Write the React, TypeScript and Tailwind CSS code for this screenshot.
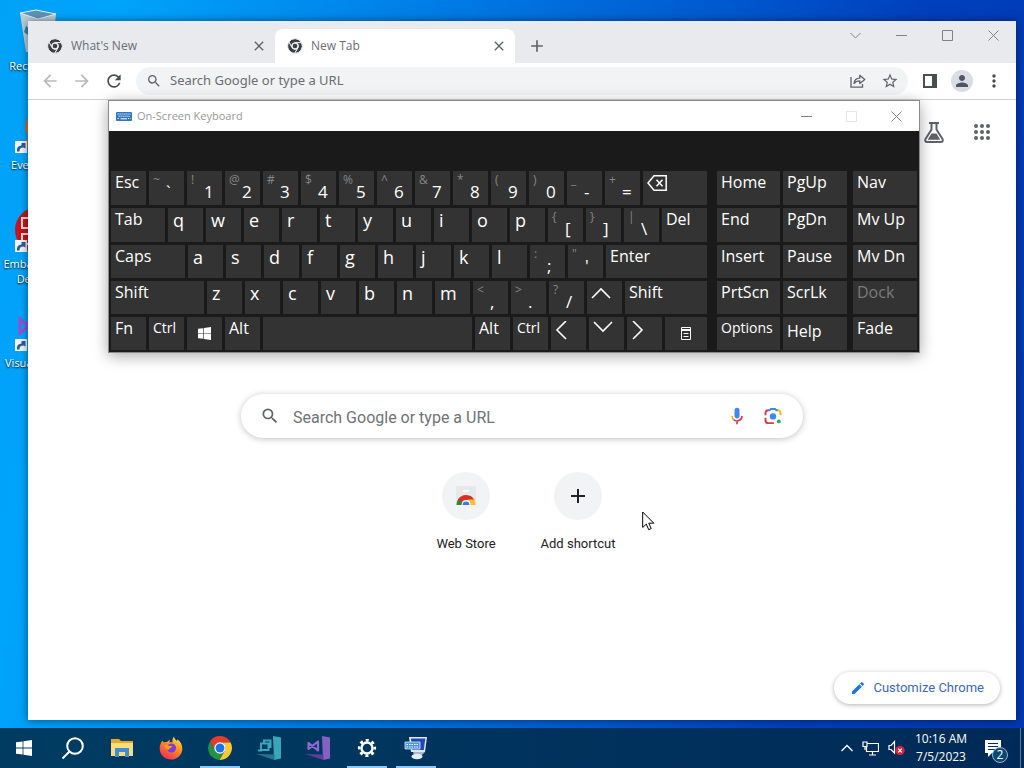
import type { ReactNode } from "react";
import {
  MdAdd,
  MdArrowBack,
  MdArrowForward,
  MdClose,
  MdEdit,
  MdMoreVert,
  MdPerson,
  MdRefresh,
  MdSearch,
  MdStarBorder,
} from "react-icons/md";

type KeyKind = "letter" | "label" | "small" | "low" | "dual" | "icon" | "dim";

type KeyDef = {
  text?: string;
  alt?: string;
  name?: string;
  kind: KeyKind;
  width: string;
  icon?: ReactNode;
};

const W = "flex-[35_1_0px]";

const letters = (chars: string): KeyDef[] =>
  chars.split("").map((c) => ({ text: c, kind: "letter", width: W }));

const duals = (pairs: string[]): KeyDef[] =>
  pairs.map((p) => ({ alt: p[0], text: p[1], kind: "dual", width: W }));

const label = (text: string, width: string, kind: KeyKind = "label"): KeyDef => ({ text, width, kind });

function Arrow({ d }: { d: string }) {
  return (
    <svg width="20" height="20" viewBox="0 0 20 20" fill="none" stroke="#fff" strokeWidth="1.6">
      <path d={d} />
    </svg>
  );
}

function WindowsLogo({ size }: { size: number }) {
  return (
    <svg width={size} height={size} viewBox="0 0 16 16" fill="#fff">
      <path d="M0 2.3 6.6 1.4v6.2H0zM7.4 1.3 16 0v7.6H7.4zM0 8.4h6.6v6.2L0 13.7zM7.4 8.4H16V16l-8.6-1.3z" />
    </svg>
  );
}

const backspaceIcon = (
  <svg width="20" height="16" viewBox="0 0 20 16" fill="none" stroke="#fff" strokeWidth="1.5">
    <path d="M7 .8h12.2v14.4H7L1 8zM9.5 4.8l6 6.4M15.5 4.8l-6 6.4" />
  </svg>
);

const menuIcon = (
  <svg width="10" height="13" viewBox="0 0 10 13" fill="none" stroke="#fff">
    <path d="M.5.5h9v12h-9zM0 2.5h10M0 3.5h10M2.5 6.5h5M2.5 9.5h5" />
  </svg>
);

const mainRows: KeyDef[][] = [
  [
    label("Esc", W),
    ...duals(["~`", "!1", "@2", "#3", "$4", "%5", "^6", "&7", "*8", "(9", ")0", "_-", "+="]),
    { name: "Backspace", kind: "label", width: "flex-[64_1_0px]", icon: backspaceIcon },
  ],
  [
    label("Tab", "flex-[54_1_0px]"),
    ...letters("qwertyuiop"),
    ...duals(["{[", "}]", "|\\"]),
    label("Del", "flex-[45_1_0px]"),
  ],
  [
    label("Caps", "flex-[74_1_0px]"),
    ...letters("asdfghjkl"),
    ...duals([":;", "\"'"]),
    label("Enter", "flex-[101_1_0px]"),
  ],
  [
    label("Shift", "flex-[93_1_0px]"),
    ...letters("zxcvbnm"),
    ...duals(["<,", ">.", "?/"]),
    { name: "Up", kind: "label", width: W, icon: <Arrow d="M1 13 10 4l9 9" /> },
    label("Shift", "flex-[82_1_0px]"),
  ],
  [
    label("Fn", W),
    label("Ctrl", W, "small"),
    { name: "Windows", kind: "icon", width: W, icon: <WindowsLogo size={13} /> },
    label("Alt", W),
    { name: "Space", kind: "label", width: "flex-[209_1_0px]" },
    label("Alt", W),
    label("Ctrl", W, "small"),
    { name: "Left", kind: "label", width: W, icon: <Arrow d="M11 0 2 9l9 9" /> },
    { name: "Down", kind: "label", width: W, icon: <Arrow d="M1 1l9 9 9-9" /> },
    { name: "Right", kind: "label", width: W, icon: <Arrow d="M2 0l9 9-9 9" /> },
    { name: "Menu", kind: "icon", width: "flex-[42_1_0px]", icon: menuIcon },
  ],
];

const navRows: KeyDef[][] = [
  ["Home", "PgUp"],
  ["End", "PgDn"],
  ["Insert", "Pause"],
  ["PrtScn", "ScrLk"],
  ["Options", "Help"],
].map(([a, b]) => [
  label(a, "flex-[63_1_0px]", a === "Options" ? "small" : "label"),
  label(b, "flex-[64_1_0px]", b === "Help" ? "low" : "label"),
]);

const sideRows: KeyDef[][] = ["Nav", "Mv Up", "Mv Dn", "Dock", "Fade"].map((t) => [
  label(t, "flex-1", t === "Dock" ? "dim" : "label"),
]);

const kindClass: Record<KeyKind, string> = {
  letter: "items-start px-[5px] text-lg leading-6",
  label: "items-start px-1 text-base leading-[22px]",
  small: "items-start px-1 text-sm leading-[22px]",
  low: "items-start px-1 text-base leading-7",
  dim: "items-start px-1 text-base leading-[22px] text-[#7a7a7a]",
  dual: "items-start pl-1",
  icon: "items-center justify-center",
};

function Key({ k }: { k: KeyDef }) {
  // padding sits on the inner span so the flex weights stay exact
  return (
    <button
      aria-label={k.name}
      className={`flex min-w-0 overflow-hidden whitespace-nowrap bg-[#333333] text-left ${k.width}`}
    >
      <span className={`flex h-full w-full ${kindClass[k.kind]}`}>
        {k.kind === "dual" ? (
          <>
            <span className="w-[13px] shrink-0 text-xs leading-[18px] text-[#858585]">{k.alt}</span>
            <span className="pt-[9px] text-[17px] leading-6">{k.text}</span>
          </>
        ) : k.icon && k.kind === "label" ? (
          <span className="pt-1">{k.icon}</span>
        ) : (
          (k.icon ?? k.text)
        )}
      </span>
    </button>
  );
}

function KeyBlock({ rows, className }: { rows: KeyDef[][]; className: string }) {
  return (
    <div className={`grid grid-rows-[34px_34px_33px_33px_33px] gap-[3px] ${className}`}>
      {rows.map((row, i) => (
        <div key={i} className="flex min-w-0 gap-[3px]">
          {row.map((k, j) => (
            <Key key={j} k={k} />
          ))}
        </div>
      ))}
    </div>
  );
}

function WinGlyph({ d, color = "#808286" }: { d: string; color?: string }) {
  return (
    <svg width="11" height="11" viewBox="0 0 11 11" fill="none" stroke={color}>
      <path d={d} />
    </svg>
  );
}

function OnScreenKeyboard() {
  return (
    <section
      aria-label="On-Screen Keyboard"
      className="absolute left-[108px] right-[104px] top-[100px] border border-[#8a8a8a] bg-[#1a1a1a] shadow-[0_3px_14px_rgba(0,0,0,0.35)]"
    >
      <header className="flex h-[30px] items-center bg-white text-[#999999]">
        <svg className="ml-[7px]" width="16" height="9" viewBox="0 0 16 9">
          <rect width="16" height="9" rx="1" fill="#2f75c0" />
          <path d="M1.5 2h13M2.5 4.2h12M1.5 6.5h2M12 6.5h2.5" stroke="#fff" strokeDasharray="1.2 .8" />
          <path d="M4.5 6.8h6.5" stroke="#fff" />
        </svg>
        <span className="ml-[5px] flex-1 text-[11px]">On-Screen Keyboard</span>
        <button aria-label="Minimize" className="flex h-full w-[45px] items-center justify-center">
          <WinGlyph d="M0 5.5h11" />
        </button>
        <button aria-label="Maximize" className="flex h-full w-[45px] items-center justify-center" disabled>
          <WinGlyph d="M.5.5h10v10H.5z" color="#e4e4e4" />
        </button>
        <button aria-label="Close" className="flex h-full w-[45px] items-center justify-center">
          <WinGlyph d="M.5.5l10 10M10.5.5l-10 10" />
        </button>
      </header>
      <div className="flex px-[2px] pb-[2px] pt-10 text-white">
        <KeyBlock rows={mainRows} className="flex-[596_1_0px]" />
        <KeyBlock rows={navRows} className="ml-[10px] flex-[130_1_0px]" />
        <KeyBlock rows={sideRows} className="ml-[6px] flex-[64_1_0px]" />
      </div>
    </section>
  );
}

const CHROME_TOP = "M5.54 12.03A22 22 0 0 1 43.6 14H24A10 10 0 0 0 15.34 29z";
const CHROME_RIGHT = "M43.6 14A22 22 0 0 1 22.86 45.97L32.66 29A10 10 0 0 0 24 14z";
const CHROME_LEFT = "M22.86 45.97A22 22 0 0 1 5.54 12.03L15.34 29A10 10 0 0 0 32.66 29z";

function ChromeMono() {
  return (
    <svg width="16" height="16" viewBox="0 0 48 48" className="shrink-0">
      <g fill="#3c4043" stroke="#eef0f2" strokeWidth="3">
        <path d={CHROME_TOP} />
        <path d={CHROME_RIGHT} />
        <path d={CHROME_LEFT} />
      </g>
      <circle cx="24" cy="24" r="10" fill="#eef0f2" />
      <circle cx="24" cy="24" r="7" fill="#3c4043" />
    </svg>
  );
}

function ChromeLogo() {
  return (
    <svg width="26" height="26" viewBox="0 0 48 48">
      <path d={CHROME_TOP} fill="#e33b2e" />
      <path d={CHROME_RIGHT} fill="#fcc934" />
      <path d={CHROME_LEFT} fill="#229342" />
      <circle cx="24" cy="24" r="10.5" fill="#fff" />
      <circle cx="24" cy="24" r="8.2" fill="#1a73e8" />
    </svg>
  );
}

function Tab({ title, active }: { title: string; active?: boolean }) {
  return (
    <div
      className={`flex h-[34px] w-60 min-w-0 items-center rounded-t-lg pl-3 pr-2 ${active ? "bg-white" : ""}`}
    >
      <ChromeMono />
      <span className="ml-2 flex-1 truncate text-xs text-[#6a6d71]">{title}</span>
      <button aria-label={`Close ${title}`}>
        <MdClose size={16} color="#5f6368" />
      </button>
    </div>
  );
}

function ToolButton({ name, children }: { name: string; children: ReactNode }) {
  return (
    <button aria-label={name} className="flex size-7 shrink-0 items-center justify-center rounded-full text-[#5f6368]">
      {children}
    </button>
  );
}

function Toolbar() {
  return (
    <div className="flex h-[37px] items-center gap-1 border-b border-[#cfd2d6] bg-white px-2">
      <ToolButton name="Back">
        <MdArrowBack size={20} color="#b8babd" />
      </ToolButton>
      <ToolButton name="Forward">
        <MdArrowForward size={20} color="#b8babd" />
      </ToolButton>
      <ToolButton name="Reload">
        <MdRefresh size={20} color="#4a4d51" />
      </ToolButton>
      <label className="mx-1 flex h-7 min-w-0 flex-1 items-center gap-1 rounded-full bg-[#f1f3f4] pl-[10px] pr-1">
        <MdSearch size={16} color="#5f6368" className="shrink-0" />
        <input
          aria-label="Address bar"
          placeholder="Search Google or type a URL"
          className="min-w-0 flex-1 bg-transparent pl-1 font-['Noto_Sans',sans-serif] text-[13px] outline-none placeholder:text-[#6a6d71]"
        />
        <ToolButton name="Share">
          <svg width="16" height="14" viewBox="0 0 16 14" fill="none" stroke="#5f6368" strokeWidth="1.3">
            <path d="M1 3v10.2h11.5V10" />
            <path d="M4 9.5C4.3 6 6.5 4.3 9.8 4.2V1.3l5 4.2-5 4V6.900C7.300 6.900 5.400 7.600 4 9.500z" strokeLinejoin="round" />
          </svg>
        </ToolButton>
        <ToolButton name="Bookmark">
          <MdStarBorder size={18} />
        </ToolButton>
      </label>
      <ToolButton name="Side panel">
        <svg width="14" height="14" viewBox="0 0 14 14">
          <path d="M1 1h12v12H1z" fill="none" stroke="#4a4d51" strokeWidth="2" />
          <path d="M9 1h5v12H9z" fill="#4a4d51" />
        </svg>
      </ToolButton>
      <ToolButton name="Profile">
        <span className="flex size-[22px] items-center justify-center rounded-full bg-[#dadde6]">
          <MdPerson size={18} color="#4f5563" />
        </span>
      </ToolButton>
      <ToolButton name="Menu">
        <MdMoreVert size={20} color="#4a4d51" />
      </ToolButton>
    </div>
  );
}

function Shortcut({ title, children }: { title: string; children: ReactNode }) {
  return (
    <a href="#" className="flex w-28 flex-col items-center">
      <span className="flex size-12 items-center justify-center rounded-full bg-[#f1f3f4]">{children}</span>
      <span className="mt-[14px] text-[13px] leading-5 text-[#202124]">{title}</span>
    </a>
  );
}

function NewTabPage() {
  return (
    <main className="flex min-h-0 flex-1 flex-col bg-white font-[Roboto,sans-serif]">
      <div className="flex h-16 shrink-0 items-center justify-end gap-6 pr-[22px]">
        <button aria-label="Search Labs">
          <svg width="24" height="24" viewBox="0 0 24 24" fill="none" stroke="#5f6368" strokeWidth="2">
            <path d="M7 3h10M9.5 3v6.5L3.500 19c-.8 1.400-.1 3 1.500 3h14c1.600 0 2.300-1.600 1.500-3L14.500 9.500V3" />
            <path d="M9.500 13.500h5l3.800 6.200H5.700z" fill="#5f6368" stroke="none" />
          </svg>
        </button>
        <button aria-label="Google apps">
          <svg width="24" height="24" viewBox="0 0 24 24" fill="#5f6368">
            {[6, 12, 18].map((y) => [6, 12, 18].map((x) => <circle key={`${x}-${y}`} cx={x} cy={y} r="2" />))}
          </svg>
        </button>
      </div>

      <label className="mx-auto mt-[230px] flex h-11 w-full max-w-[562px] shrink-0 items-center rounded-full pl-[19px] pr-[20px] shadow-[0_1px_6px_rgba(32,33,36,0.28)]">
        <MdSearch size={20} color="#5f6368" className="shrink-0" />
        <input
          aria-label="Search"
          placeholder="Search Google or type a URL"
          className="h-full min-w-0 flex-1 bg-transparent pl-[13px] pt-[2px] text-base outline-none placeholder:text-[#6f7377]"
        />
        <button aria-label="Search by voice">
          <svg width="20" height="20" viewBox="0 0 24 24">
            <path d="M12 15c1.700 0 3-1.300 3-3V5a3 3 0 0 0-6 0v7c0 1.700 1.300 3 3 3z" fill="#4285f4" />
            <path d="M11 18.500h2V22h-2z" fill="#c5443c" />
            <path d="M6 12a6 6 0 0 0 1.800 4.300" fill="none" stroke="#f9ab00" strokeWidth="2" />
            <path d="M7.800 16.200A6 6 0 0 0 18 12" fill="none" stroke="#d93a4c" strokeWidth="2" />
          </svg>
        </button>
        <button aria-label="Search by image" className="ml-4">
          <svg width="20" height="20" viewBox="0 0 24 24" fill="none" strokeWidth="2.300">
            <path d="M3 11V8.500C3 6.500 4.500 5 6.500 5" stroke="#d93a4c" />
            <path d="M6 5h2l1.500-1.500h5L16 5h2" stroke="#4285f4" />
            <path d="M17.500 5C19.500 5 21 6.500 21 8.500V11" stroke="#f9bb1a" />
            <path d="M3 14v3c0 2 1.500 3.500 3.500 3.500H13" stroke="#d93a4c" />
            <circle cx="12" cy="12.500" r="3.800" fill="#4285f4" />
            <circle cx="19" cy="18.500" r="2.300" fill="#34a853" />
          </svg>
        </button>
      </label>

      <nav className="mt-[34px] flex justify-center">
        <Shortcut title="Web Store">
          <svg width="24" height="24" viewBox="0 0 24 24">
            <path d="M2 2h20v16H2z" fill="#e6e8e9" />
            <path d="M9 6h6v2H9z" fill="#fafafa" />
            <path d="M2.500 21A9.500 9.500 0 0 1 6 13.500L9.500 21z" fill="#1e8e3e" />
            <path d="M4 15.500A9.500 9.500 0 0 1 20.500 16H12a5 5 0 0 0-4.500 3z" fill="#d93025" />
            <path d="M20.300 15.500A9.500 9.500 0 0 1 21.500 21H16a4.500 4.500 0 0 0-2.500-5.500z" fill="#fbc02d" />
            <path d="M7.500 21a4.500 4.500 0 0 1 9 0z" fill="#fff" />
            <path d="M8.600 21a3.400 3.400 0 0 1 6.800 0z" fill="#3b78e7" />
          </svg>
        </Shortcut>
        <Shortcut title="Add shortcut">
          <MdAdd size={24} color="#202124" />
        </Shortcut>
      </nav>

      <button className="mb-4 mr-4 mt-auto flex h-8 items-center gap-[7px] self-end rounded-full bg-white px-4 text-[13px] text-[#3b68c0] shadow-[0_1px_4px_rgba(60,64,67,0.4)]">
        <MdEdit size={16} color="#1a73e8" />
        Customize Chrome
      </button>
    </main>
  );
}

function Browser() {
  return (
    <section
      aria-label="Browser"
      className="absolute bottom-2 left-7 right-2 top-[21px] flex flex-col overflow-hidden bg-[#e8eaed] shadow-[0_0_8px_rgba(0,0,0,0.5)]"
    >
      <div className="flex h-[42px] shrink-0 items-start pl-[7px]">
        <div className="flex min-w-0 flex-1 items-center pt-2">
          <Tab title="What's New" />
          <Tab title="New Tab" active />
          <button aria-label="New tab" className="ml-3">
            <MdAdd size={20} color="#5f6368" />
          </button>
        </div>
        {[
          ["Search tabs", "M.5 3l5 5 5-5"],
          ["Minimize", "M0 5.5h11"],
          ["Maximize", "M.5.5h10v10H.5z"],
          ["Close", "M.5.5l10 10M10.5.5l-10 10"],
        ].map(([name, d]) => (
          <button key={name} aria-label={name} className="flex h-7 w-[46px] items-center justify-center">
            <WinGlyph d={d} />
          </button>
        ))}
      </div>
      <Toolbar />
      <NewTabPage />
    </section>
  );
}

function DesktopIcon({ lines, shortcut, children }: { lines: string[]; shortcut?: boolean; children: ReactNode }) {
  return (
    <a href="#" className="flex h-[99px] w-[76px] flex-col items-center text-[11px] leading-[15px] text-white">
      <span className="relative mb-[2px] size-12 shrink-0">
        {children}
        {shortcut && (
          <svg className="absolute bottom-[2px] left-px" width="12" height="12" viewBox="0 0 12 12">
            <path d="M0 0h12v12H0z" fill="#f2f4f6" />
            <path d="M2 10.5C1.800 6.500 3.500 4.800 6.500 4.600V2L10.500 2v5.500L8.500 6.500C5.500 6.500 4.500 8 4.500 10.500z" fill="#2c5aa0" />
          </svg>
        )}
      </span>
      {lines.map((l) => (
        <span key={l} className="whitespace-nowrap [text-shadow:0_1px_2px_#000]">
          {l}
        </span>
      ))}
    </a>
  );
}

function DesktopIcons() {
  return (
    <div className="flex flex-col pt-2">
      <DesktopIcon lines={["Recycle Bin"]}>
        <svg width="48" height="48" viewBox="0 0 48 48">
          <path d="M6 5 22 2l20 4-4 38H12z" fill="#b9cfdc" />
          <path d="M6 5 22 2l20 4-18 5z" fill="#5d93b5" stroke="#e3edf3" />
          <path d="M12 18l4 3-2 6-4-3z" fill="#2f86b5" />
        </svg>
      </DesktopIcon>
      <DesktopIcon lines={["Everything"]} shortcut>
        <svg width="48" height="48" viewBox="0 0 48 48" fill="none" stroke="#d96a1c" strokeWidth="5">
          <circle cx="28" cy="20" r="14" />
          <path d="M18 31 8 42" />
        </svg>
      </DesktopIcon>
      <DesktopIcon lines={["Embarcadero", "Dev-C++"]} shortcut>
        <svg width="48" height="48" viewBox="0 0 48 48">
          <circle cx="24" cy="24" r="23" fill="#c4161c" />
          <path d="M8 12h9v10H8zM8 28h9v10H8z" fill="none" stroke="#f6d5d5" strokeWidth="2" />
        </svg>
      </DesktopIcon>
      <DesktopIcon lines={["Visual Studio"]} shortcut>
        <svg width="48" height="48" viewBox="0 0 48 48" fill="none" stroke="#9b4fd0" strokeWidth="3">
          <path d="M6 14v14l18-14v14z" />
          <path d="M26 6l16 5v26l-16 5z" fill="#7b3fb0" />
        </svg>
      </DesktopIcon>
    </div>
  );
}

// Visual Studio family: a tall slab on the right with a small mark left of it
function StudioIcon({ color, dark, children }: { color: string; dark: string; children: ReactNode }) {
  return (
    <svg width="26" height="26" viewBox="0 0 26 26" fill="none">
      <path d="M17 1l8 1.5v21L18 25z" fill={color} />
      <path d="M0 19l18.500.5V25z" fill={dark} />
      {children}
    </svg>
  );
}

function TaskButton({ name, open, children }: { name: string; open?: boolean; children: ReactNode }) {
  return (
    <button aria-label={name} className="flex h-full w-12 flex-col items-center">
      <span className="flex flex-1 items-center">{children}</span>
      <span className={`-mt-[2px] h-[2px] w-10 ${open ? "bg-[#8cc8f5]" : ""}`} />
    </button>
  );
}

function Taskbar() {
  return (
    <footer className="flex h-10 shrink-0 items-center bg-linear-to-r from-[#003c62] to-[#002a58] text-xs text-white">
      <div className="flex h-full flex-1 gap-px">
        <TaskButton name="Start">
          <WindowsLogo size={16} />
        </TaskButton>
        <TaskButton name="Search">
          <svg width="24" height="24" viewBox="0 0 24 24" fill="none" stroke="#fff" strokeWidth="2">
            <circle cx="14" cy="10" r="7.800" />
            <path d="M8.500 15.500 1.500 22.500" />
          </svg>
        </TaskButton>
        <TaskButton name="File Explorer">
          <svg width="22" height="20" viewBox="0 0 22 20">
            <path d="M0 1h8l2 2h12v15H0z" fill="#e3a92f" />
            <path d="M0 5h22v13H0z" fill="#fbdc7c" />
            <path d="M4 10h14v9h-4v-5H8v5H4z" fill="#3f8ed2" />
          </svg>
        </TaskButton>
        <TaskButton name="Firefox">
          <svg width="24" height="24" viewBox="0 0 24 24">
            <defs>
              <linearGradient id="fox" x1="0.8" y1="0" x2="0.2" y2="1">
                <stop offset="0" stopColor="#ffe14d" />
                <stop offset=".45" stopColor="#ff8a1f" />
                <stop offset="1" stopColor="#f5245c" />
              </linearGradient>
            </defs>
            <path
              d="M3.500 4.500c.3 1 .8 1.600 1.500 2 .9-.5 2-.6 3-.4C9 4.800 10 4.200 11.200 4c-.6.8-.8 1.500-.6 2.300h3C13 4 13.800 2 15 .5c.3 2 1.500 3 2.600 4.200.7-.2 1-.7 1-1.400 2.900 2.300 4.700 5.500 4.700 9.100C23.300 18.800 18.300 23.500 12 23.500S.7 18.800.7 12.500c0-3 1-5.800 2.800-8z"
              fill="url(#fox)"
            />
            <circle cx="12.500" cy="12" r="4.600" fill="#7b3fd6" />
            <path d="M5 9.500c2-1 4-.5 5.500.5 1.500-.3 2.500.3 3 1-1.500.2-2.500.7-3.500 2.500-2 .5-3-.5-4-2z" fill="#ff9a2e" />
          </svg>
        </TaskButton>
        <TaskButton name="Chrome" open>
          <ChromeLogo />
        </TaskButton>
        <TaskButton name="Visual Studio Installer">
          <StudioIcon color="#3aa7b8" dark="#23768c">
            <path d="M5 15V8.500h7.500V15zM8 8V5.500h6.500V12H13" stroke="#3aa7b8" strokeWidth="2" />
            <path d="M2 15.500h4" stroke="#3aa7b8" strokeWidth="2" />
          </StudioIcon>
        </TaskButton>
        <TaskButton name="Visual Studio">
          <StudioIcon color="#8661c5" dark="#5b3f9a">
            <path d="M3.500 8v6L13 6.500v9z" stroke="#8f6bd0" strokeWidth="2.200" strokeLinejoin="round" />
          </StudioIcon>
        </TaskButton>
        <TaskButton name="Settings" open>
          <svg width="20" height="20" viewBox="0 0 20 20" fill="none" stroke="#fff">
            <circle cx="10" cy="10" r="5.500" strokeWidth="2.400" />
            <circle cx="10" cy="10" r="7.800" strokeWidth="2.600" strokeDasharray="3.060 3.060" strokeDashoffset="1.530" />
          </svg>
        </TaskButton>
        <TaskButton name="On-Screen Keyboard" open>
          <svg width="24" height="24" viewBox="0 0 24 24">
            <path d="M5 1h18l-2 15H7z" fill="#dfe6f2" />
            <path d="M7 2.500h14.300l-1.500 11.500H8z" fill="#2446b0" />
            <path d="M1 6h15v7H1z" fill="#4a95df" stroke="#dcecfb" strokeWidth=".8" />
            <path d="M2.500 8.500h12M2.500 11h12" stroke="#fff" strokeDasharray="1.500 1" />
            <path d="M9 16h12l-3 3h-8z" fill="#aab4c8" />
            <ellipse cx="13" cy="20.500" rx="5.500" ry="2.800" fill="#e8ebf0" />
          </svg>
        </TaskButton>
      </div>

      <div className="flex items-center gap-[9px]">
        <button aria-label="Show hidden icons">
          <svg width="12" height="8" viewBox="0 0 12 8" fill="none" stroke="#fff" strokeWidth="1.300">
            <path d="M.5 7 6 1.500 11.500 7" />
          </svg>
        </button>
        <svg width="17" height="15" viewBox="0 0 17 15" fill="none" stroke="#fff" strokeWidth="1.200">
          <path d="M5.500 2.500h11v8h-12V6M10.500 10.500v3M7 14h7M1 1h4v4.500H1zM3 5.500V9" />
        </svg>
        <svg width="17" height="16" viewBox="0 0 17 16" fill="none">
          <path d="M1 5.500h2l3.500-4v11.500L3 9.500H1z" stroke="#fff" strokeWidth="1.200" />
          <circle cx="12" cy="10.500" r="4.700" fill="#d9233b" />
          <path d="M10.200 8.700l3.600 3.600M13.800 8.700l-3.600 3.600" stroke="#fff" strokeWidth="1.200" />
        </svg>
      </div>
      <div className="ml-2 flex w-[56px] flex-col items-center whitespace-nowrap leading-[18px]">
        <span>10:16 AM</span>
        <span>7/5/2023</span>
      </div>
      <button aria-label="Notifications, 2 new" className="relative ml-[15px] mr-3 h-6 w-6">
        <svg width="24" height="24" viewBox="0 0 24 24">
          <path d="M1 4h16v13H8l-4 4v-4H1z" fill="#fff" />
          <path d="M4 7.500h10M4 10.500h10M4 13.500h7" stroke="#01305b" strokeWidth="1.200" />
        </svg>
        <span className="absolute -bottom-[3px] right-0 flex size-4 items-center justify-center rounded-full border border-[#8fb4d4] bg-[#0c4675] text-xs leading-none">
          2
        </span>
      </button>
      <button aria-label="Show desktop" className="h-full w-1 border-l border-[#5d7b98]" />
    </footer>
  );
}

export default function App() {
  return (
    <div className="flex h-screen flex-col overflow-hidden font-['Open_Sans','Noto_Sans',sans-serif]">
      <div className="relative min-h-0 flex-1 overflow-hidden bg-[linear-gradient(100deg,#00a2f6_0%,#00a4fb_10%,#0072e0_45%,#0040bd_80%,#0038b0_100%)]">
        <DesktopIcons />
        <Browser />
        <OnScreenKeyboard />
        <svg className="absolute left-[642px] top-[511px]" width="13" height="20" viewBox="0 0 13 20">
          <path d="M.7 1v15.500l3.600-3.400 2.400 5.600 2.500-1.100-2.400-5.400h5z" fill="#fff" stroke="#000" />
        </svg>
      </div>
      <Taskbar />
    </div>
  );
}
